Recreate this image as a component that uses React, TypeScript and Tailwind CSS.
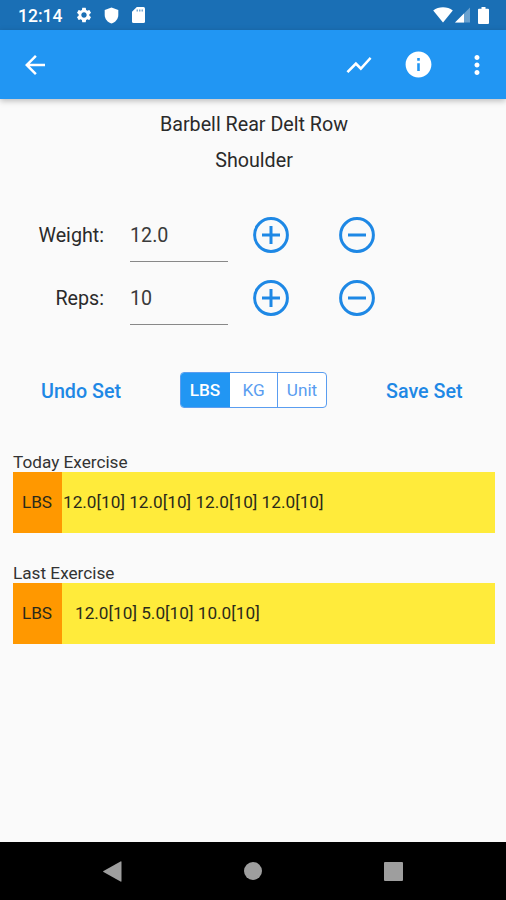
import { MdArrowBack, MdShowChart, MdInfo, MdMoreVert, MdSettings } from 'react-icons/md';

function StatusBar() {
  return (
    <div className="flex h-[30px] shrink-0 items-center bg-[#1a6fb5] pl-[18px] pr-[16px] text-white">
      <span className="w-[57px] pt-[2px] text-[17.5px] font-medium leading-[30px]">12:14</span>
      <MdSettings className="size-[18px]" />
      <svg className="ml-[11px] h-[17px] w-[15px]" viewBox="0 0 15 17" fill="currentColor">
        <path d="M7.5 .5 14.3 3v5c0 4-3 7.400-6.800 8.500C3.700 15.400.700 12 .700 8V3z" />
      </svg>
      <svg className="ml-[13px] h-[16px] w-[13px]" viewBox="0 0 13 16" fill="currentColor">
        <path d="M4.800 0H11.500Q13 0 13 1.500V14.500Q13 16 11.500 16H1.500Q0 16 0 14.500V4.800z" />
        <path d="M4.500 2.400h1.500v2H4.500zM7 2.400h1.500v2H7zM9.500 2.400H11v2H9.500z" fill="#1a6fb5" opacity=".6" />
      </svg>
      <svg className="ml-auto h-[16px] w-[20px]" viewBox="0 0 20 16" fill="currentColor">
        <path d="M10 15.500.200 3.500C3 1.300 6.300.300 10 .300s7 1 9.800 3.200z" />
      </svg>
      <svg className="ml-[2px] h-[16px] w-[15px]" viewBox="0 0 15 16" fill="currentColor">
        <path opacity=".35" d="M15 .500V15.500H0z" />
        <path d="M9 6.500V15.500H0z" />
      </svg>
      <svg className="ml-[8px] mr-px h-[17px] w-[11px]" viewBox="0 0 11 17" fill="currentColor">
        <path d="M3.500 0h4v1.700H10q1 0 1 1V16q0 1-1 1H1q-1 0-1-1V2.700q0-1 1-1h2.500z" />
      </svg>
    </div>
  );
}

function AppBar() {
  return (
    <header className="relative flex h-[69px] shrink-0 items-center bg-[#2196f3] pl-[20px] pr-[14px] text-white shadow-[0_2px_6px_rgba(0,0,0,0.25)]">
      <MdArrowBack className="size-[30px]" />
      <MdShowChart className="ml-auto size-[30px]" />
      <MdInfo className="ml-[28.5px] size-[31px]" />
      <MdMoreVert className="ml-[28.5px] size-[30px]" />
    </header>
  );
}

function RoundButton({ sign }: { sign: 'plus' | 'minus' }) {
  return (
    <button className="mt-[10px] size-[36px] text-[#1e88e5]">
      <svg className="size-[36px]" viewBox="0 0 36 36" fill="none" stroke="currentColor" strokeWidth="3">
        <circle cx="18" cy="18" r="16.400" />
        <path d={sign === 'plus' ? 'M9 18H27M18 9V27' : 'M9 18H27'} />
      </svg>
    </button>
  );
}

function Stepper({ label, value }: { label: string; value: string }) {
  return (
    <div className="flex h-[63px] items-start">
      <div className="w-[104px] pt-[17px] text-right text-[19.7px] leading-[24px]">{label}</div>
      <div className="ml-[26px] h-[55px] w-[98px] border-b border-[#888] pt-[17px] text-[19.7px] leading-[24px] text-[#3a3a3a]">{value}</div>
      <div className="ml-[25px] flex gap-[50px]">
        <RoundButton sign="plus" />
        <RoundButton sign="minus" />
      </div>
    </div>
  );
}

function History({ title, children, inset }: { title: string; children: string; inset: string }) {
  return (
    <section className="h-[111px] px-[13px]">
      <h2 className="h-[20px] text-[17.2px] leading-[20px] text-[#333]">{title}</h2>
      <div className="flex h-[61px] w-[481.5px] items-center bg-[#ffeb3b] text-[17.2px] text-[#2a2a1a]">
        <div className="flex h-full w-[49px] items-center justify-center bg-[#ff9800] pr-px">LBS</div>
        <div className={inset}>{children}</div>
      </div>
    </section>
  );
}

export default function App() {
  return (
    <div className="flex h-[900px] w-[506px] flex-col overflow-hidden bg-[#fafafa] font-['Roboto',sans-serif] text-[#2a2a2a]">
      <StatusBar />
      <AppBar />
      <main className="flex-1">
        <div className="pl-[2px] pt-[8px] text-center text-[19.7px] leading-[36px]">
          <div>Barbell Rear Delt Row</div>
          <div>Shoulder</div>
        </div>
        <div className="mt-[28px]">
          <Stepper label="Weight:" value="12.0" />
          <Stepper label="Reps:" value="10" />
        </div>
        <div className="mt-[39px] flex h-[36px] items-center text-[#1e88e5]">
          <button className="ml-[41px] w-[139px] pt-[3px] text-left text-[19.7px] font-medium">Undo Set</button>
          <div className="flex h-[36px] w-[147px] overflow-hidden rounded-[4px] border border-[#5a9df0] bg-white text-[17.2px] text-[#5a9df0]">
            <button className="w-[49px] bg-[#2196f3] pr-px pt-[2px] font-medium text-white">LBS</button>
            <button className="w-[48px] border-r border-[#5a9df0] pt-[2px]">KG</button>
            <button className="flex-1 pt-[2px]">Unit</button>
          </div>
          <button className="ml-[59px] pt-[3px] text-[19.7px] font-medium">Save Set</button>
        </div>
        <div className="mt-[44px]">
          <History title="Today Exercise" inset="pl-px">12.0[10] 12.0[10] 12.0[10] 12.0[10]</History>
          <History title="Last Exercise" inset="pl-[13px]">12.0[10] 5.0[10] 10.0[10]</History>
        </div>
      </main>
      <nav className="flex h-[58px] shrink-0 items-center bg-black pl-[103px] text-[#9e9e9e]">
        <svg className="h-[21px] w-[19px]" viewBox="0 0 19 21" fill="currentColor">
          <path d="M17.500.500Q18.500 0 18.500 1V20q0 1-1 .500L.500 11q-.800-.500 0-1z" />
        </svg>
        <div className="ml-[122px] size-[18px] rounded-full bg-[#9e9e9e]" />
        <div className="ml-[122px] size-[19px] rounded-[1px] bg-[#9e9e9e]" />
      </nav>
    </div>
  );
}
